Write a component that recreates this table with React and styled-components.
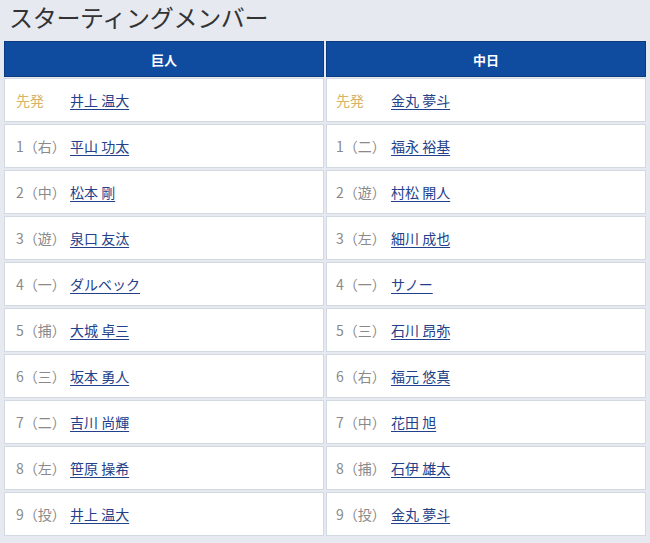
import React from 'react';
import styled, { createGlobalStyle } from 'styled-components';

const GlobalStyle = createGlobalStyle`
  html, body {
    margin: 0;
    padding: 0;
    background: #e6e9f0;
    font-family: "Noto Sans CJK JP", "Noto Sans", sans-serif;
  }
`;

const Page = styled.div`
  width: 650px;
  height: 543px;
  overflow: hidden;
  background: #e6e9f0;
`;

const Title = styled.h1`
  margin: 0;
  padding: 2px 0 0 9px;
  height: 39px;
  box-sizing: border-box;
  font-size: 24px;
  line-height: 30px;
  font-weight: 400;
  color: #333;
  letter-spacing: -0.3px;
  white-space: nowrap;
`;

const Teams = styled.div`
  display: grid;
  grid-template-columns: 1fr 1fr;
  gap: 2px;
  padding: 2px 4px 0 4px;
`;

const Column = styled.div`
  display: flex;
  flex-direction: column;
  gap: 2px;
`;

const Header = styled.div`
  height: 34px;
  display: flex;
  align-items: center;
  justify-content: center;
  background: #0f4b9f;
  border: 1px solid #0a3a7e;
  color: #fff;
  font-size: 13px;
  font-weight: 700;
  margin-bottom: -1px;
`;

const Row = styled.div`
  height: 42px;
  display: flex;
  align-items: center;
  background: #fff;
  border: 1px solid #d3d9e3;
  padding-left: ${p => p.$pad}px;
  font-size: 14px;
`;

const Order = styled.span`
  width: ${p => p.$w}px;
  flex-shrink: 0;
  color: ${p => (p.$starter ? '#d6b262' : '#8a8a8a')};
`;

const Name = styled.a`
  color: #23418a;
  text-decoration: underline;
  text-underline-offset: 3px;
  cursor: pointer;
`;

const giants = [
  ['先発', '井上 温大'],
  ['1（右）', '平山 功太'],
  ['2（中）', '松本 剛'],
  ['3（遊）', '泉口 友汰'],
  ['4（一）', 'ダルベック'],
  ['5（捕）', '大城 卓三'],
  ['6（三）', '坂本 勇人'],
  ['7（二）', '吉川 尚輝'],
  ['8（左）', '笹原 操希'],
  ['9（投）', '井上 温大'],
];

const dragons = [
  ['先発', '金丸 夢斗'],
  ['1（二）', '福永 裕基'],
  ['2（遊）', '村松 開人'],
  ['3（左）', '細川 成也'],
  ['4（一）', 'サノー'],
  ['5（三）', '石川 昂弥'],
  ['6（右）', '福元 悠真'],
  ['7（中）', '花田 旭'],
  ['8（捕）', '石伊 雄太'],
  ['9（投）', '金丸 夢斗'],
];

const Team = ({ name, players, pad, w }) => (
  <Column>
    <Header>{name}</Header>
    {players.map(([order, player], i) => (
      <Row key={i} $pad={pad}>
        <Order $w={w} $starter={i === 0}>{order}</Order>
        <Name>{player}</Name>
      </Row>
    ))}
  </Column>
);

export default function App() {
  return (
    <Page>
      <GlobalStyle />
      <Title>スターティングメンバー</Title>
      <Teams>
        <Team name="巨人" players={giants} pad={11} w={54} />
        <Team name="中日" players={dragons} pad={9} w={55} />
      </Teams>
    </Page>
  );
}
